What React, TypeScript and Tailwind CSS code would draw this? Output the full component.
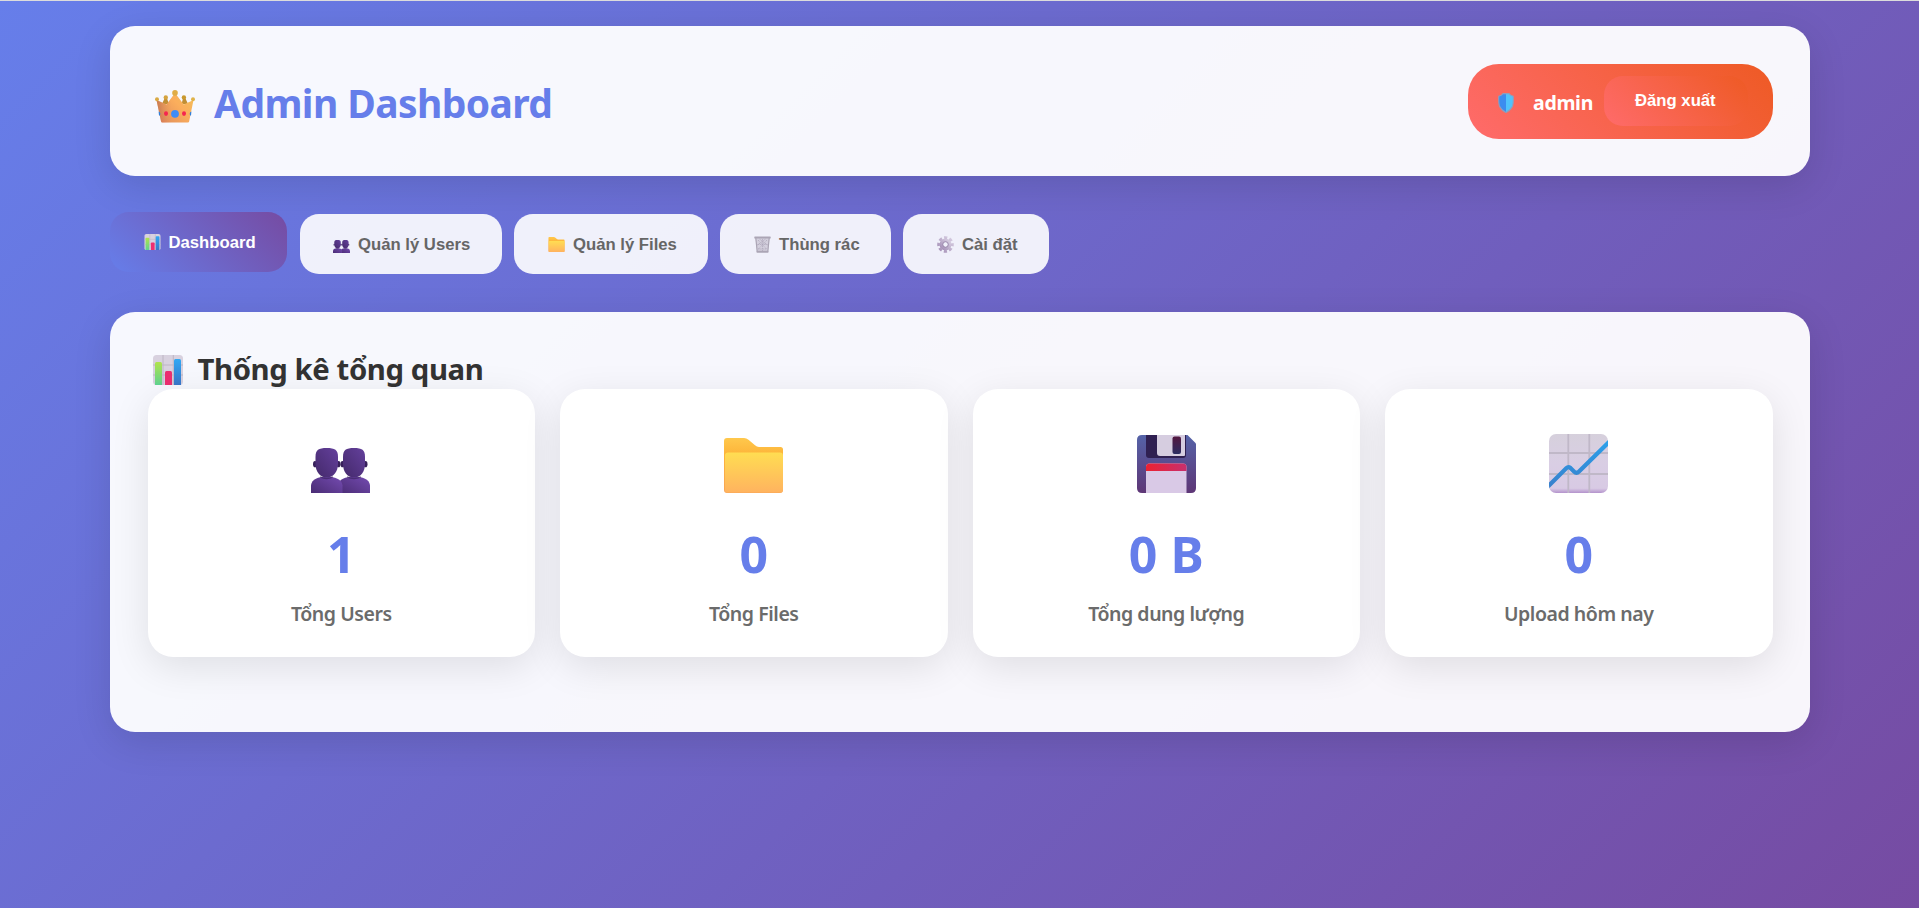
import React from "react";

type IconProps = { className?: string };

function CrownIcon({ className }: IconProps) {
  return (
    <svg viewBox="0 0 40 33" className={className}>
      <defs>
        <linearGradient id="crownBody" x1="0" y1="1" x2="1" y2="0.3">
          <stop offset="0" stopColor="#ed7a5c" />
          <stop offset="0.25" stopColor="#e8965c" />
          <stop offset="0.7" stopColor="#fbae5c" />
          <stop offset="1" stopColor="#f5b95a" />
        </linearGradient>
        <linearGradient id="crownSide" x1="0" y1="0" x2="1" y2="0">
          <stop offset="0" stopColor="#b86b4c" stopOpacity="0.7" />
          <stop offset="0.4" stopColor="#d98f5a" stopOpacity="0" />
        </linearGradient>
      </defs>
      <path d="M9.5 8.5H12L14 14H7zM28 8.500H30.500L33 14H26.500z" fill="#c08f35" />
      <path d="M1.500 10 11.500 14.6 18.500 5H21.500L28.800 14.6 38.500 10 34.2 31.3Q34 32.5 32.8 32.5H7.4Q6.2 32.5 6 31.3Z" fill="url(#crownBody)" />
      <path d="M1.500 10 11.500 14.6 18.500 5H21.500L28.800 14.6 38.500 10 34.2 31.3Q34 32.5 32.8 32.5H7.4Q6.2 32.5 6 31.3Z" fill="url(#crownSide)" />
      <circle cx="2" cy="9.2" r="2" fill="#d9a944" />
      <circle cx="10.8" cy="7.4" r="2.2" fill="#d5a33f" />
      <circle cx="20" cy="2.9" r="2.8" fill="#e0ad47" />
      <circle cx="28.9" cy="7.4" r="2.2" fill="#c9992f" />
      <circle cx="38" cy="9.2" r="2" fill="#e0b34a" />
      <circle cx="20" cy="23.8" r="3.9" fill="#3f8cf5" />
      <ellipse cx="11" cy="23.6" rx="2" ry="2.3" fill="#f5254f" />
      <ellipse cx="29" cy="23.6" rx="2" ry="2.3" fill="#f5254f" />
      <path d="M3.6 21.6q1.7.3 1.7 2.2t-1.3 2zM36.4 21.6q-1.7.3-1.7 2.2t1.3 2z" fill="#2f7fdc" />
    </svg>
  );
}

function ShieldIcon({ className }: IconProps) {
  return (
    <svg viewBox="0 0 16 20" className={className}>
      <path d="M8 .5Q6.5.5 5 .6 4 2.500 .8 3.200 .4 10 1.400 13 3.500 17.500 8 19.500Z" fill="#3b8def" />
      <path d="M8 .5Q9.500.5 11 .6 12 2.500 15.200 3.200 15.600 10 14.600 13 12.500 17.500 8 19.500Z" fill="#50c3fb" />
      <path d="M5 .6H11Q12 2.500 15.200 3.200 15.600 10 14.600 13 12.500 17.500 8 19.500 3.500 17.500 1.400 13 .4 10 .8 3.200 4 2.500 5 .6Z" fill="none" stroke="#8f9fbd" strokeWidth="1.100" />
    </svg>
  );
}

function BarsIcon({ className }: IconProps) {
  return (
    <svg viewBox="0 0 30 30" className={className}>
      <defs>
        <linearGradient id="barGreen" x1="0" y1="0" x2="0" y2="1">
          <stop offset="0" stopColor="#b1e34c" />
          <stop offset="1" stopColor="#5fd391" />
        </linearGradient>
        <linearGradient id="barBlue" x1="0" y1="0" x2="0" y2="1">
          <stop offset="0" stopColor="#30a8f4" />
          <stop offset="1" stopColor="#3a76c9" />
        </linearGradient>
      </defs>
      <rect width="30" height="30" rx="3.500" fill="#d8d1df" />
      <path d="M0 10H30M0 20H30M10 0V30M20.300 0V30" stroke="#bdb6c4" strokeWidth="1" />
      <path d="M2 30V8.500Q2 7 3.500 7h4Q9 7 9 8.500V30z" fill="url(#barGreen)" />
      <path d="M12 30V17.500Q12 16 13.500 16h4Q19 16 19 17.500V30z" fill="#ec2f70" />
      <path d="M21 30V5.500Q21 4 22.500 4h4Q28 4 28 5.500V30z" fill="url(#barBlue)" />
    </svg>
  );
}

function UsersIcon({ className }: IconProps) {
  return (
    <svg viewBox="0 0 59 46" preserveAspectRatio="none" className={className}>
      <defs>
        <linearGradient id="userHead" x1="0" y1="1" x2="1" y2="0">
          <stop offset="0" stopColor="#44296b" />
          <stop offset="1" stopColor="#64409c" />
        </linearGradient>
        <linearGradient id="userBody" x1="0" y1="1" x2="1" y2="0.200">
          <stop offset="0" stopColor="#4a2c74" />
          <stop offset="1" stopColor="#7048ab" />
        </linearGradient>
      </defs>
      <path d="M27 46V38C28 32 34 29.500 43 29.500S58 32 59 38V46Z" fill="url(#userBody)" />
      <ellipse cx="31.500" cy="16.500" rx="2" ry="3.200" fill="#37205a" />
      <ellipse cx="54.500" cy="16.500" rx="2" ry="3.200" fill="#37205a" />
      <path d="M32 9C32 2 35 0 43 0S54 2 54 9V16C54 24 50 30 43 30S32 24 32 16Z" fill="url(#userHead)" />
      <path d="M0 46V38C1 32 7 29.500 15.500 29.500S30.500 32 31.500 38V46Z" fill="url(#userBody)" />
      <ellipse cx="4" cy="16.500" rx="2" ry="3.200" fill="#37205a" />
      <ellipse cx="27.500" cy="16.500" rx="2" ry="3.200" fill="#37205a" />
      <path d="M4.500 9C4.500 2 7.500 0 15.700 0S27 2 27 9V16C27 24 22.500 30 15.700 30S4.500 24 4.500 16Z" fill="url(#userHead)" />
      <path d="M9 29.500Q15.700 33 22 29.500M36 29.500Q43 33 50 29.500" stroke="#37205a" strokeWidth="1.500" fill="none" opacity=".6" />
    </svg>
  );
}

function FolderIcon({ className }: IconProps) {
  return (
    <svg viewBox="0 0 59 55" className={className}>
      <defs>
        <linearGradient id="folderFront" x1="0" y1="0" x2="0" y2="1">
          <stop offset="0" stopColor="#ffdd52" />
          <stop offset="1" stopColor="#ffb35f" />
        </linearGradient>
        <linearGradient id="folderBack" x1="0" y1="0" x2="0" y2="1">
          <stop offset="0" stopColor="#ffc84c" />
          <stop offset="0.300" stopColor="#fdb43a" />
          <stop offset="1" stopColor="#f9a556" />
        </linearGradient>
      </defs>
      <path d="M0 52V3Q0 0 3 0H20Q22.500 0 24.500 1.800L31 7.300Q32.800 9 35 9H56.500Q59 9 59 11.500V52Q59 55 56 55H3Q0 55 0 52Z" fill="url(#folderBack)" />
      <path d="M1 52V17.500Q1 14.500 4 14.500H56Q59 14.500 59 17.500V51.500Q59 54.600 56 54.600H4Q1 54.600 1 52Z" fill="url(#folderFront)" />
    </svg>
  );
}

function FloppyIcon({ className }: IconProps) {
  return (
    <svg viewBox="0 0 59 58" className={className}>
      <defs>
        <linearGradient id="diskBody" x1="0" y1="0" x2="0" y2="1">
          <stop offset="0" stopColor="#5563a8" />
          <stop offset="1" stopColor="#5e3676" />
        </linearGradient>
        <linearGradient id="diskStripe" x1="0" y1="0" x2="1" y2="0">
          <stop offset="0" stopColor="#ec2131" />
          <stop offset="1" stopColor="#c8306e" />
        </linearGradient>
        <linearGradient id="diskSlot" x1="0" y1="0" x2="0" y2="1">
          <stop offset="0" stopColor="#54183f" />
          <stop offset="1" stopColor="#2c2d62" />
        </linearGradient>
      </defs>
      <path d="M0 5Q0 0 5 0H50.500L59 8.500V53Q59 58 54 58H5Q0 58 0 53Z" fill="url(#diskBody)" />
      <path d="M9 0H49V20Q49 23 46 23H12Q9 23 9 20Z" fill="#302052" />
      <path d="M20 0H48V20Q48 21 47 21H23Q20 21 20 18Z" fill="#d6cde0" />
      <rect x="35.500" y="1.500" width="8.500" height="17.500" rx="2" fill="url(#diskSlot)" />
      <path d="M9 58V32Q9 28.500 12.500 28.500H46Q49.500 28.500 49.500 32V58Z" fill="#d9c9e6" />
      <path d="M9 36V32Q9 28.500 12.500 28.500H46Q49.500 28.500 49.500 32V36Z" fill="url(#diskStripe)" />
    </svg>
  );
}

function TrendIcon({ className }: IconProps) {
  return (
    <svg viewBox="0 0 59 59" className={className}>
      <defs>
        <linearGradient id="trendPaper" x1="0" y1="0" x2="0" y2="1">
          <stop offset="0" stopColor="#d6d0dc" />
          <stop offset="0.500" stopColor="#d9cee4" />
          <stop offset="0.920" stopColor="#d8cae4" />
          <stop offset="1" stopColor="#b493cc" />
        </linearGradient>
        <linearGradient id="trendLine" x1="0" y1="0" x2="0" y2="1">
          <stop offset="0" stopColor="#2ba0ea" />
          <stop offset="1" stopColor="#3980cc" />
        </linearGradient>
        <clipPath id="trendClip">
          <rect width="59" height="59" rx="7" />
        </clipPath>
      </defs>
      <g clipPath="url(#trendClip)">
        <rect width="59" height="59" fill="url(#trendPaper)" />
        <path d="M0 19H59M0 40H59M19.300 0V59M40.300 0V59" stroke="#c0b8c8" strokeWidth="1.800" />
        <path d="M-2 53.500 17.500 34Q19.300 32.200 21.500 34L25 37.500Q27.500 40 30 37.500L61 7" fill="none" stroke="url(#trendLine)" strokeWidth="4.200" />
      </g>
    </svg>
  );
}

function BinIcon({ className }: IconProps) {
  return (
    <svg viewBox="0 0 17 17" className={className}>
      <path d="M1.500 1.500H15.500L14 16H3Z" fill="#d3cfdd" />
      <path d="M4 4 12.500 13M13 4 4.500 13M8.500 3V15M3.500 8.500H13.500M5.500 3 13.500 9M11.500 3 3.500 9M4 13H13" stroke="#aca5b8" strokeWidth=".7" strokeDasharray="1.500 .7" />
      <path d="M1.800 2 3.200 15.500M15.200 2 13.800 15.500" stroke="#aaa4b4" strokeWidth="1.200" />
      <rect x=".3" y=".5" width="16.400" height="2" rx=".6" fill="#aba5b5" />
      <rect x="2.500" y="14.800" width="12" height="1.900" rx=".6" fill="#aba5b5" />
    </svg>
  );
}

function GearIcon({ className }: IconProps) {
  return (
    <svg viewBox="0 0 17 17" className={className}>
      <defs>
        <linearGradient id="gearFill" x1="1" y1="0" x2="0" y2="1">
          <stop offset="0" stopColor="#d8cfe2" />
          <stop offset="1" stopColor="#a48fb6" />
        </linearGradient>
      </defs>
      <g fill="none" stroke="url(#gearFill)">
        <circle cx="8.500" cy="8.500" r="4.200" strokeWidth="3.600" />
        <circle cx="8.500" cy="8.500" r="6.900" strokeWidth="2.800" strokeDasharray="3.200 2.219" strokeDashoffset="1.600" />
      </g>
      <circle cx="8.500" cy="8.500" r="2.800" fill="none" stroke="#9a88ab" strokeWidth=".9" />
    </svg>
  );
}

const tabs = [
  { label: "Quản lý Users", icon: <UsersIcon className="mt-[4px] h-[13px] w-[17px]" />, box: "w-[202px] pl-[33px]" },
  { label: "Quản lý Files", icon: <FolderIcon className="mt-px h-[15px] w-[17px]" />, box: "w-[194px] pl-[34px]" },
  { label: "Thùng rác", icon: <BinIcon className="h-[17px] w-[17px]" />, box: "w-[171px] pl-[34px]" },
  { label: "Cài đặt", icon: <GearIcon className="h-[17px] w-[17px]" />, box: "w-[146px] pl-[34px]" },
];

const stats = [
  { label: "Tổng Users", value: "1", icon: <UsersIcon className="mr-[2px] h-[45px] w-[59px]" /> },
  { label: "Tổng Files", value: "0", icon: <FolderIcon className="h-[55px] w-[59px]" /> },
  { label: "Tổng dung lượng", value: "0 B", icon: <FloppyIcon className="h-[58px] w-[59px]" /> },
  { label: "Upload hôm nay", value: "0", icon: <TrendIcon className="h-[59px] w-[59px]" /> },
];

export default function App() {
  return (
    <div className="h-[908px] w-full overflow-hidden border-t border-[#dcdcdc] bg-linear-135/srgb from-[#667eea] to-[#764ba2] bg-origin-border px-[110px] pt-[25px] font-['Noto_Sans',sans-serif]">
      <header className="flex h-[150px] w-[1700px] items-center justify-between rounded-[25px] bg-white/95 pr-[37px] pl-[45px] shadow-[0_10px_38px_rgba(0,0,0,0.12)]">
        <h1 className="flex items-center text-[39px] font-bold tracking-[-0.600px] text-[#667eea]">
          <CrownIcon className="mt-[11px] mr-[19px] h-[33px] w-[40px]" />
          <span className="pt-[4px]">Admin Dashboard</span>
        </h1>
        <div className="flex h-[75px] w-[305px] items-center rounded-[31px] bg-linear-45/srgb from-[#ff6b6b] to-[#ee5a24] pl-[30px] text-white">
          <ShieldIcon className="mt-[3px] h-[20px] w-[16px]" />
          <span className="ml-[19px] w-[59px] pt-[3px] text-[19.500px] font-bold tracking-[-0.300px] whitespace-nowrap">admin</span>
          <button className="ml-[12px] flex h-[50px] w-[144px] items-center rounded-[19px] bg-linear-45/srgb from-[#ff6b6b] to-[#ee5a24] pl-[31px] font-['Liberation_Sans',sans-serif] text-[16.700px] font-bold">
            Đăng xuất
          </button>
        </div>
      </header>

      <nav className="mt-[38px] flex h-[60px] font-['Liberation_Sans',sans-serif] text-[16.700px] font-bold text-[#666]">
        <button className="mt-[-2.500px] mr-[13px] flex h-[60px] w-[177px] items-center rounded-[19px] bg-linear-45/srgb from-[#667eea] to-[#764ba2] pl-[34px] text-white">
          <BarsIcon className="mr-[7.500px] h-[16px] w-[17px]" />
          <span className="pt-[2px]">Dashboard</span>
        </button>
        {tabs.map((tab) => (
          <button key={tab.label} className={`mr-[12px] flex h-[60px] items-center rounded-[19px] bg-white/90 ${tab.box}`}>
            <span className="mr-[8px] flex">{tab.icon}</span>
            <span className="pt-[2px] whitespace-nowrap">{tab.label}</span>
          </button>
        ))}
      </nav>

      <main className="mt-[38px] h-[420px] w-[1700px] rounded-[25px] bg-white/95 px-[37.500px] pt-[38px] shadow-[0_10px_38px_rgba(0,0,0,0.12)]">
        <h2 className="flex h-[39px] items-center pl-[5px] text-[29.300px] font-bold tracking-[-0.400px] text-[#333]">
          <BarsIcon className="mt-[1px] mr-[15px] h-[30px] w-[30px]" />
          <span>Thống kê tổng quan</span>
        </h2>
        <section className="grid grid-cols-4 gap-[25px]">
          {stats.map((stat) => (
            <article key={stat.label} className="flex h-[268px] flex-col items-center rounded-[25px] bg-white shadow-[0_10px_38px_rgba(0,0,0,0.1)]">
              <div className="flex h-[104px] items-end">{stat.icon}</div>
              <p className="mt-[27px] text-[50px] leading-[68px] font-bold text-[#667eea]">{stat.value}</p>
              <p className="mt-[12px] text-[19.500px] leading-[27px] font-semibold tracking-[-0.450px] text-[#6b6b6b]">{stat.label}</p>
            </article>
          ))}
        </section>
      </main>
    </div>
  );
}
